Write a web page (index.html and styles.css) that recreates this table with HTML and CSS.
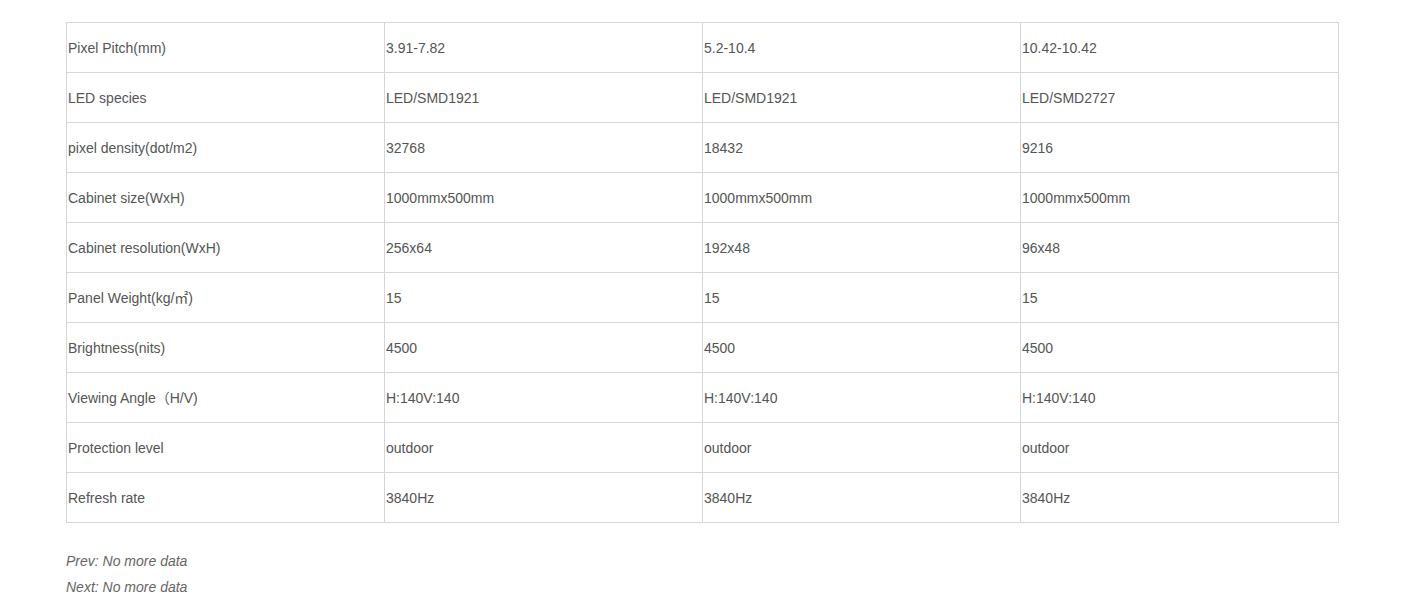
FILE: index.html
```html
<!DOCTYPE html>
<html>
<head>
<meta charset="utf-8">
<link rel="stylesheet" href="styles.css">
</head>
<body>
<div class="page">
  <table class="spec">
    <tbody>
      <tr><td>Pixel Pitch(mm)</td><td>3.91-7.82</td><td>5.2-10.4</td><td>10.42-10.42</td></tr>
      <tr><td>LED species</td><td>LED/SMD1921</td><td>LED/SMD1921</td><td>LED/SMD2727</td></tr>
      <tr><td>pixel density(dot/m2)</td><td>32768</td><td>18432</td><td>9216</td></tr>
      <tr><td>Cabinet size(WxH)</td><td>1000mmx500mm</td><td>1000mmx500mm</td><td>1000mmx500mm</td></tr>
      <tr><td>Cabinet resolution(WxH)</td><td>256x64</td><td>192x48</td><td>96x48</td></tr>
      <tr><td>Panel Weight(kg/㎡)</td><td>15</td><td>15</td><td>15</td></tr>
      <tr><td>Brightness(nits)</td><td>4500</td><td>4500</td><td>4500</td></tr>
      <tr><td>Viewing Angle（H/V)</td><td>H:140V:140</td><td>H:140V:140</td><td>H:140V:140</td></tr>
      <tr><td>Protection level</td><td>outdoor</td><td>outdoor</td><td>outdoor</td></tr>
      <tr><td>Refresh rate</td><td>3840Hz</td><td>3840Hz</td><td>3840Hz</td></tr>
    </tbody>
  </table>
  <div class="nav">
    <p>Prev: No more data</p>
    <p>Next: No more data</p>
  </div>
</div>
</body>
</html>
```
FILE: styles.css
```css
html, body {
  margin: 0;
  padding: 0;
  background: #fff;
}
.page {
  padding: 22px 0 0 66px;
  font-family: "Liberation Sans", Arial, "Noto Sans CJK SC", sans-serif;
  font-size: 14px;
  color: #555;
}
.spec {
  border-collapse: collapse;
  width: 1273px;
  table-layout: fixed;
}
.spec td {
  border: 1px solid #d4d7de;
  height: 49px;
  padding: 0 1px;
  vertical-align: middle;
  line-height: 20px;
}
.nav {
  margin-top: 25px;
}
.nav p {
  margin: 0;
  line-height: 26px;
  font-style: italic;
  color: #666;
}
```
